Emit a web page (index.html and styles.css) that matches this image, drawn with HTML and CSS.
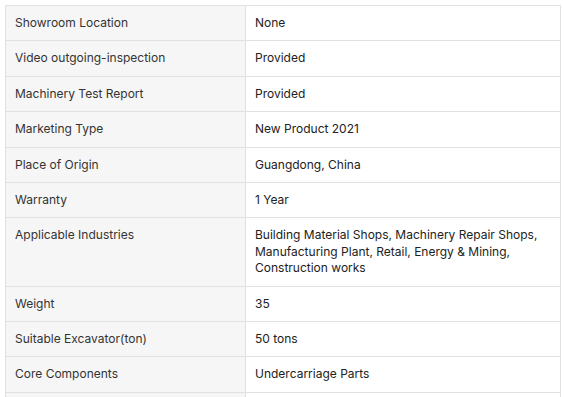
FILE: index.html
```html
<!DOCTYPE html>
<html>
<head>
<meta charset="utf-8">
<link rel="stylesheet" href="styles.css">
</head>
<body>
<table class="spec">
  <tbody>
    <tr><th>Showroom Location</th><td>None</td></tr>
    <tr><th>Video outgoing-inspection</th><td>Provided</td></tr>
    <tr><th>Machinery Test Report</th><td>Provided</td></tr>
    <tr><th>Marketing Type</th><td>New Product 2021</td></tr>
    <tr><th>Place of Origin</th><td>Guangdong, China</td></tr>
    <tr><th>Warranty</th><td>1 Year</td></tr>
    <tr><th>Applicable Industries</th><td>Building Material Shops, Machinery Repair Shops, Manufacturing Plant, Retail, Energy &amp; Mining, Construction works</td></tr>
    <tr><th>Weight</th><td>35</td></tr>
    <tr><th>Suitable Excavator(ton)</th><td>50 tons</td></tr>
    <tr><th>Core Components</th><td>Undercarriage Parts</td></tr>
    <tr class="blank"><th></th><td></td></tr>
  </tbody>
</table>
</body>
</html>
```
FILE: styles.css
```css
html, body {
  margin: 0;
  padding: 0;
  background: #ffffff;
}
body {
  padding: 5px;
  font-family: Inter, "Noto Sans", sans-serif;
  font-size: 12px;
  color: #333333;
}
.spec {
  border-collapse: collapse;
  width: 556px;
  table-layout: fixed;
}
.spec th,
.spec td {
  border: 1px solid #e1e1e1;
  padding: 9px 9px 9px 9px;
  line-height: 16.4px;
  text-align: left;
  vertical-align: top;
  font-weight: 400;
}
.spec th {
  width: 221px;
  background: #f6f6f6;
  color: #333333;
}
.spec td {
  background: #ffffff;
  color: #222222;
}
.spec .blank th,
.spec .blank td {
  height: 16.4px;
}
```
